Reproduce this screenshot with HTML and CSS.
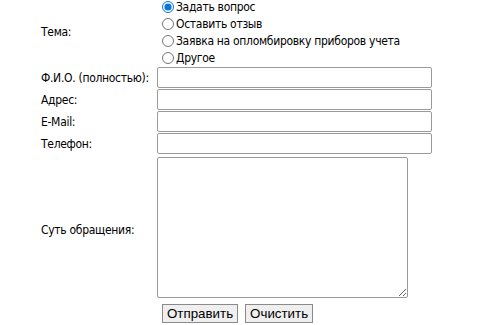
FILE: index.html
```html
<!DOCTYPE html>
<html lang="ru">
<head>
<meta charset="utf-8">
<title>Обращение</title>
<link rel="stylesheet" href="styles.css">
</head>
<body>
<form class="form">
  <div class="label">Тема:</div>
  <div class="radios">
    <label class="radio"><input type="radio" name="t" checked><span>Задать вопрос</span></label>
    <label class="radio"><input type="radio" name="t"><span>Оставить отзыв</span></label>
    <label class="radio"><input type="radio" name="t"><span>Заявка на опломбировку приборов учета</span></label>
    <label class="radio"><input type="radio" name="t"><span>Другое</span></label>
  </div>

  <div class="label">Ф.И.О. (полностью):</div>
  <div class="field"><input class="text" type="text"></div>

  <div class="label">Адрес:</div>
  <div class="field"><input class="text" type="text"></div>

  <div class="label">E-Mail:</div>
  <div class="field"><input class="text" type="text"></div>

  <div class="label">Телефон:</div>
  <div class="field"><input class="text" type="text"></div>

  <div class="label label-low">Суть обращения:</div>
  <div class="field"><textarea class="area"></textarea></div>

  <div></div>
  <div class="buttons">
    <button type="button" class="btn">Отправить</button>
    <button type="reset" class="btn">Очистить</button>
  </div>
</form>
</body>
</html>
```

FILE: styles.css
```css
html, body {
  margin: 0;
  padding: 0;
  background: #fff;
}

.form {
  display: grid;
  grid-template-columns: 116px 280px;
  row-gap: 1px;
  padding-left: 41px;
  margin-top: -2px;
  font-family: "DejaVu Sans Condensed", "DejaVu Sans", sans-serif;
  font-size: 12px;
  letter-spacing: -0.3px;
  color: #000;
}

.label {
  display: flex;
  align-items: center;
  white-space: nowrap;
}

.label-low {
  padding-top: 6px;
}

.radios {
  display: flex;
  flex-direction: column;
}

.radio {
  display: flex;
  align-items: center;
  height: 17px;
  white-space: nowrap;
}

.radio input {
  margin: 0 2px 0 5px;
  width: 12px;
  height: 12px;
  accent-color: #0a74da;
}

.field {
  display: flex;
  align-items: center;
}

.text {
  box-sizing: border-box;
  width: 275px;
  height: 21px;
  margin: 0;
  border: 1px solid #9a9a9a;
  border-radius: 2px;
  background: #fff;
}

.area {
  box-sizing: border-box;
  width: 251px;
  height: 141px;
  margin: 2px 0 0;
  border: 1px solid #9a9a9a;
  border-radius: 2px;
  resize: both;
}

.buttons {
  display: flex;
  gap: 7px;
  padding: 5px 0 0 5px;
}

.btn {
  box-sizing: border-box;
  height: 19px;
  padding: 0 4px;
  font-family: "Liberation Sans", Arial, sans-serif;
  font-size: 13.33px;
  letter-spacing: 0;
  color: #000;
  background: #efefef;
  border: 1px solid #8a8a8a;
  border-radius: 0;
}
```
